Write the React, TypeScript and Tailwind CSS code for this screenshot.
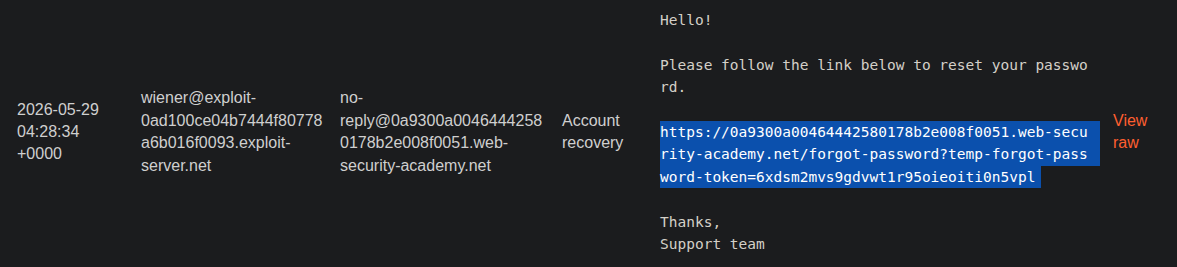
export default function App() {
  const sans = "font-['Liberation_Sans',Arial,sans-serif] text-[16px] leading-[22.4px]";
  return (
    <div className="h-[267px] w-[1177px] overflow-hidden bg-[#1b1c1e] text-[#cfcfcf]">
      <div className="flex items-center py-[9px]">
        {/* date */}
        <div className={`w-[141px] shrink-0 pl-[17px] pr-2 ${sans}`}>
          2026-05-29
          <br />
          04:28:34
          <br />
          +0000
        </div>

        {/* to */}
        <div className={`w-[199px] shrink-0 pr-[13px] break-all ${sans}`}>
          <span className="break-normal">wiener@exploit-</span>
          <br />
          0ad100ce04b7444f80778
          <br />
          a6b016f0093.exploit-
          <br />
          server.net
        </div>

        {/* from */}
        <div className={`w-[222px] shrink-0 pr-[14px] ${sans}`}>
          no-
          <br />
          reply@0a9300a0046444258
          <br />
          0178b2e008f0051.web-
          <br />
          security-academy.net
        </div>

        {/* subject */}
        <div className={`w-[98px] shrink-0 pr-2 ${sans}`}>
          Account
          <br />
          recovery
        </div>

        {/* body */}
        <div className="w-[453px] shrink-0 pr-[13px] font-['DejaVu_Sans_Mono',monospace] text-[14.5px] leading-[22.4px] text-[#d4d0c8]">
          <div className="w-[436px] whitespace-pre-wrap break-all">
            {"Hello!\n\nPlease follow the link below to reset your password.\n\n"}
          </div>
          <div className="w-[440px] text-white">
            <div className="h-[22.4px] bg-[#0b50ad]">https://0a9300a00464442580178b2e008f0051.web-secu</div>
            <div className="h-[22.4px] bg-[#0b50ad]">rity-academy.net/forgot-password?temp-forgot-pass</div>
            <div className="inline-block h-[22.4px] bg-[#0b50ad] pr-[6px]">word-token=6xdsm2mvs9gdvwt1r95oieoiti0n5vpl</div>
          </div>
          <div className="whitespace-pre-wrap">{"\nThanks,\nSupport team"}</div>
        </div>

        {/* action */}
        <div className={`shrink-0 ${sans}`}>
          <a href="#" className="text-[#ff5f30]">
            View
            <br />
            raw
          </a>
        </div>
      </div>
    </div>
  );
}
